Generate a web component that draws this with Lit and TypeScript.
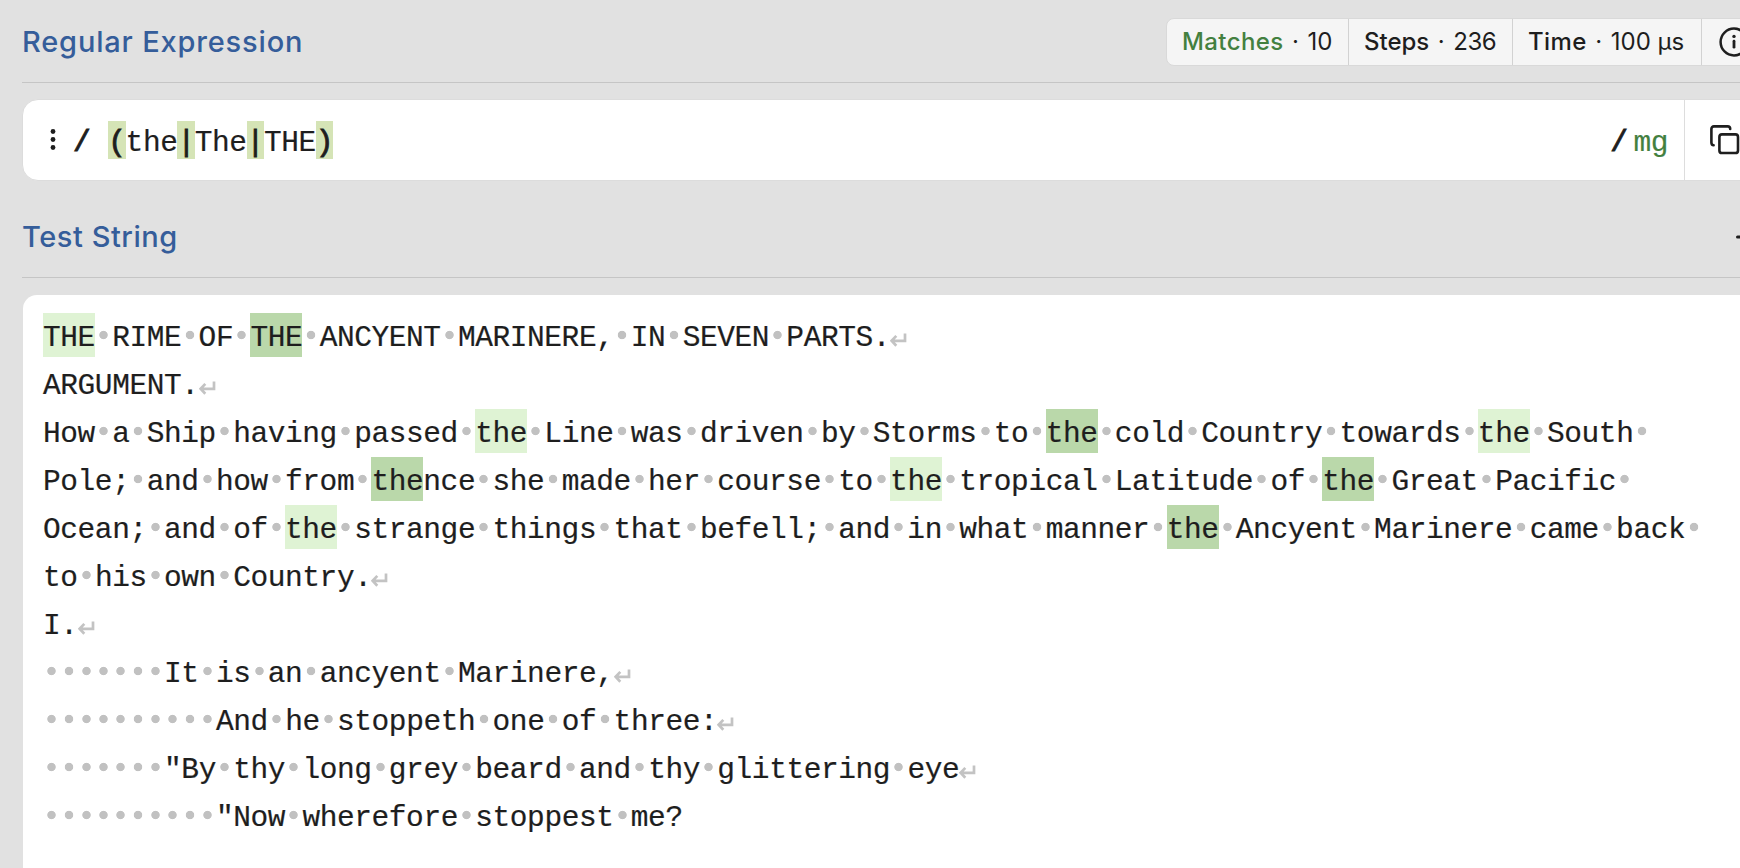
import { LitElement, html, css, svg } from "lit";
import { customElement } from "lit/decorators.js";

const LINES: { text: string; eol: boolean }[] = [
  { text: "[THE] RIME OF {THE} ANCYENT MARINERE, IN SEVEN PARTS.", eol: true },
  { text: "ARGUMENT.", eol: true },
  { text: "How a Ship having passed [the] Line was driven by Storms to {the} cold Country towards [the] South ", eol: false },
  { text: "Pole; and how from {the}nce she made her course to [the] tropical Latitude of {the} Great Pacific ", eol: false },
  { text: "Ocean; and of [the] strange things that befell; and in what manner {the} Ancyent Marinere came back ", eol: false },
  { text: "to his own Country.", eol: true },
  { text: "I.", eol: true },
  { text: "       It is an ancyent Marinere,", eol: true },
  { text: "          And he stoppeth one of three:", eol: true },
  { text: '       "By thy long grey beard and thy glittering eye', eol: true },
  { text: '          "Now wherefore stoppest me?', eol: false },
];

const renderText = (text: string) =>
  (text.match(/\[\w+\]|\{\w+\}| |[^ [\]{}]+/g) ?? []).map((t) => {
    if (t === " ") return html`<span class="space"> </span>`;
    if (t[0] === "[") return html`<span class="match light">${t.slice(1, -1)}</span>`;
    if (t[0] === "{") return html`<span class="match dark">${t.slice(1, -1)}</span>`;
    return html`<span>${t}</span>`;
  });

const returnMark = svg`<svg class="return" width="17" height="14" viewBox="0 0 17 14" fill="none" stroke="#c3c3c3" stroke-width="2.7"><path d="M15 0.5V7.8H2M6.3 2.9L1.6 7.8L6.3 12.7"/></svg>`;

@customElement("app-root")
export class AppRoot extends LitElement {
  static styles = css`
    :host { display: block; width: 1740px; height: 868px; overflow: hidden; background: #e1e1e1; color: #1e1e1e; font-family: Inter, sans-serif; }
    * { box-sizing: border-box; }
    .page { width: 1800px; height: 868px; padding-left: 22px; display: flex; flex-direction: column; }
    .head { display: flex; align-items: center; justify-content: space-between; border-bottom: 1px solid #c5c5c5; flex: none; height: 83px; padding-top: 2px; }
    .head.second { margin-top: 14px; }
    h2 { margin: 0; font-size: 29px; font-weight: 500; line-height: 40px; color: #355d9a; white-space: nowrap; }
    .t1 { letter-spacing: 0.83px; }
    .t2 { letter-spacing: 0.55px; }
    .stats { display: flex; height: 48px; width: 634px; border: 1px solid #d9d9d9; border-radius: 8px; background: #f5f5f5; font-size: 24px; line-height: 46px; white-space: nowrap; }
    .stat { display: flex; flex: none; border-right: 1px solid #d2d2d2; padding-left: 15px; }
    .stat b { font-weight: 500; letter-spacing: 0.4px; }
    .matches { width: 182px; } .steps { width: 164px; } .time { width: 189px; }
    .steps b { letter-spacing: 0; }
    .steps span:last-child { letter-spacing: -0.5px; }
    .green { color: #43803f; }
    .mid { width: 24px; text-align: center; }
    .info { margin: 7.5px 0 0 17px; }
    .regex { display: flex; align-items: center; height: 82px; margin: 16px 0 0 0; border: 1px solid #dcdcdc; border-radius: 16px; background: #fff; flex: none; }
    .mono, .line { font-family: "Liberation Mono", monospace; font-size: 29.5px; letter-spacing: -0.42px; -webkit-text-stroke: 0.2px currentColor; white-space: pre; }
    .mono { display: flex; height: 38px; line-height: 44px; }
    .group, .delim { height: 38px; -webkit-text-stroke-width: 0.9px; }
    .group { background: #d5e4b6; }
    .editor { margin-left: 1px; background: #fff; border-top-left-radius: 14px; flex: 1; margin-top: 17px; padding: 16px 0 0 20px; }
    .line { display: flex; align-items: center; height: 48px; line-height: 50px; }
    .line span { height: 44px; }
    .light { background: #dff3d4; } .dark { background: #bad8aa; }
    .space { background: radial-gradient(circle at 50% 50%, #c1c1c1 3.8px, transparent 4.6px); }
    .return { margin-top: 9px; flex: none; }
    .kebab { margin-left: 26px; }
    .open { margin-left: 16px; }
    .expr { margin-left: 18px; }
    .flags { margin-left: auto; gap: 6px; padding-right: 16px; }
    .copy { width: 115px; height: 80px; border-left: 1px solid #ddd; padding: 25px 0 0 25px; flex: none; }
    .copy svg { display: block; }
    .plus { margin-right: 19px; }
  `;

  render() {
    return html`<div class="page">
      <header class="head first">
        <h2 class="t1">Regular Expression</h2>
        <div class="stats">
          <div class="stat matches"><b class="green">Matches</b><span class="mid">·</span><span>10</span></div>
          <div class="stat steps"><b>Steps</b><span class="mid">·</span><span>236</span></div>
          <div class="stat time"><b>Time</b><span class="mid">·</span><span>100 µs</span></div>
          <svg class="info" width="30" height="30" viewBox="0 0 30 30" fill="none" stroke="#1e1e1e" stroke-width="2.5"><circle cx="15" cy="15" r="13.4"/><path d="M15 14.2v6" stroke-width="2.8" stroke-linecap="round"/><circle cx="15" cy="9.4" r="1.7" fill="#1e1e1e" stroke="none"/></svg>
        </div>
      </header>
      <div class="regex">
        <svg class="kebab" width="8" height="24" viewBox="0 0 8 24" fill="#1e1e1e"><circle cx="4" cy="3.5" r="2.4"/><circle cx="4" cy="11.5" r="2.4"/><circle cx="4" cy="19.5" r="2.4"/></svg>
        <span class="mono open"><span class="delim">/</span></span>
        <span class="mono expr"><span class="group">(</span><span>the</span><span class="group">|</span><span>The</span><span class="group">|</span><span>THE</span><span class="group">)</span></span>
        <span class="mono flags"><span class="delim">/</span><span class="green">mg</span></span>
        <div class="copy"><svg width="32" height="32" viewBox="0 0 32 32" fill="none" stroke="#1e1e1e" stroke-width="2.6" stroke-linecap="round"><rect x="9.4" y="9.4" width="18.6" height="18.6" rx="2.6"/><path d="M3.6 20.2Q1.4 20.2 1.4 17.6V4Q1.4 1.4 4 1.4H17.6Q20.2 1.4 20.2 4"/></svg></div>
      </div>
      <header class="head second">
        <h2 class="t2">Test String</h2>
        <svg class="plus" width="46" height="4" viewBox="0 0 46 4"><path d="M2.5 2H43.5" stroke="#1e1e1e" stroke-width="3" stroke-linecap="round"/></svg>
      </header>
      <div class="editor">
        ${LINES.map((l) => html`<div class="line">${renderText(l.text)}${l.eol ? returnMark : ""}</div>`)}
      </div>
    </div>`;
  }
}
